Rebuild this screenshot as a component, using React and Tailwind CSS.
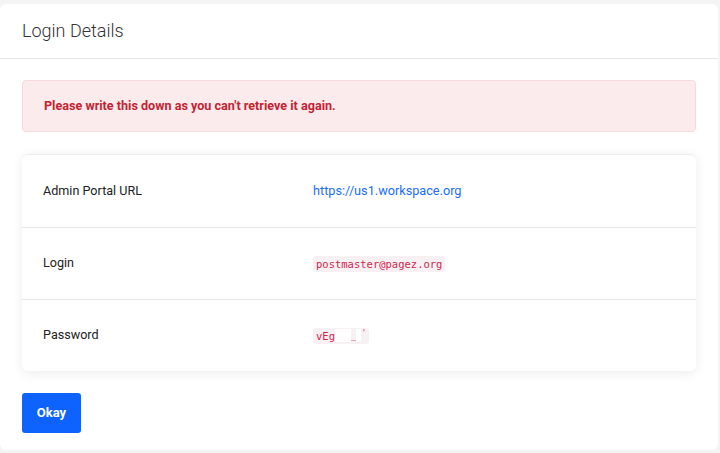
import React from 'react';

const rows = [
  { label: 'Admin Portal URL', kind: 'link', value: 'https://us1.workspace.org' },
  { label: 'Login', kind: 'code', value: 'postmaster@pagez.org' },
  { label: 'Password', kind: 'secret', value: 'vEg' },
];

function Value({ row }) {
  if (row.kind === 'link') {
    return <a href="#" className="text-[#1a6dfd] text-[12.7px] -mt-[1px]">{row.value}</a>;
  }
  if (row.kind === 'secret') {
    return (
      <code className="inline-flex items-center bg-[#f8f1f4] rounded-[3px] px-[3px] font-['DejaVu_Sans_Mono',monospace] text-[10.5px] leading-[16px] text-[#d0274f]">
        {row.value}
        <span className="inline-block w-[16px] h-[13px] bg-white"></span>
        <span className="text-[9px] leading-[9px] mt-[2px]">_</span>
        <span className="inline-block w-[5px] h-[13px] bg-white"></span>
        <span className="text-[8px] leading-[8px] -mt-[3px]">'</span>
      </code>
    );
  }
  return (
    <code className="bg-[#f8f1f4] rounded-[3px] px-[3px] font-['DejaVu_Sans_Mono',monospace] text-[10.5px] leading-[16px] text-[#d0274f]">
      {row.value}
    </code>
  );
}

export default function App() {
  return (
    <div className="min-h-screen bg-[#f4f4f4] pt-[4px] font-['Roboto',sans-serif]">
      <div className="w-[718px] h-[446px] bg-white rounded-[6px] flex flex-col">
        <div className="h-[55px] border-b border-[#e6e6e6] flex items-center px-[22px]">
          <h2 className="text-[18px] font-light text-[#333] -mt-[2px]">Login Details</h2>
        </div>
        <div className="px-[22px] pt-[21px]">
          <div className="h-[52px] bg-[#fcebec] border border-[#f8d9dc] rounded-[4px] flex items-center px-[21px]">
            <p className="text-[12.6px] font-bold text-[#c22333]">
              Please write this down as you can't retrieve it again.
            </p>
          </div>
          <div className="mt-[22px] rounded-[6px] border-t border-[#ececec] shadow-[0_2px_12px_rgba(0,0,0,0.08)]">
            {rows.map((row, i) => (
              <div
                key={row.label}
                className={`h-[72px] flex items-center px-[21px] ${i > 0 ? 'border-t border-[#e6e6e6]' : ''}`}
              >
                <div className="w-[270px] text-[12.6px] text-[#222]">{row.label}</div>
                <div className="flex-1 flex items-center"><Value row={row} /></div>
              </div>
            ))}
          </div>
          <button className="mt-[22px] w-[59px] h-[40px] bg-[#0e63ff] rounded-[3px] text-white text-[13px] font-bold">
            Okay
          </button>
        </div>
      </div>
    </div>
  );
}
